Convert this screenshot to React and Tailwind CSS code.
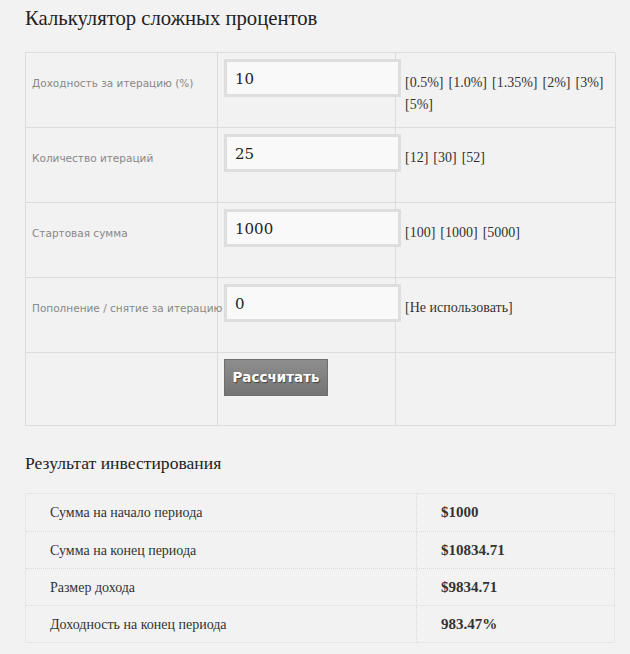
const serif = "font-['Liberation_Serif',_'DejaVu_Serif',_serif]";

const rows = [
  { label: 'Доходность за итерацию (%)', value: '10', links: ['[0.5%]', '[1.0%]', '[1.35%]', '[2%]', '[3%]', '[5%]'] },
  { label: 'Количество итераций', value: '25', links: ['[12]', '[30]', '[52]'] },
  { label: 'Стартовая сумма', value: '1000', links: ['[100]', '[1000]', '[5000]'] },
  { label: 'Пополнение / снятие за итерацию', value: '0', links: ['[Не использовать]'] },
];

const results = [
  ['Сумма на начало периода', '$1000'],
  ['Сумма на конец периода', '$10834.71'],
  ['Размер дохода', '$9834.71'],
  ['Доходность на конец периода', '983.47%'],
];

export default function App() {
  return (
    <div className="min-h-[654px] w-[630px] bg-[#f2f2f2] pl-[25px] pt-[5px] text-[#333]">
      <h1 className={`${serif} text-[20.7px] leading-[26px] text-[#222]`}>Калькулятор сложных процентов</h1>

      <div className="mt-[21px] grid w-[590px] grid-cols-[192px_178px_220px] border-l border-t border-[#dcdcdc]">
        {rows.map((r) => (
          <div key={r.label} className="contents">
            <div className="h-[75px] border-b border-r border-[#dcdcdc] pl-[6px] pt-[22px] font-['DejaVu_Sans',_sans-serif] text-[10.5px] leading-[16px] whitespace-nowrap text-[#888]">
              {r.label}
            </div>
            <div className="h-[75px] border-b border-r border-[#dcdcdc] pl-[6px] pt-[6px]">
              <input
                readOnly
                value={r.value}
                className="relative z-10 h-[38px] w-[177px] border-[3px] border-[#dedede] bg-[#f9f9f9] pl-[8px] pt-[2px] font-['DejaVu_Serif',_serif] text-[15px] text-[#222] outline-none"
              />
            </div>
            <div className={`${serif} h-[75px] border-b border-r border-[#dcdcdc] pl-[9px] pr-[4px] pt-[19px] text-[14px] leading-[22px] text-[#333]`}>
              <div className="flex flex-wrap gap-x-[5px]">
                {r.links.map((l) => (
                  <span key={l}>{l}</span>
                ))}
              </div>
            </div>
          </div>
        ))}
        <div className="h-[73px] border-b border-r border-[#dcdcdc]" />
        <div className="h-[73px] border-b border-r border-[#dcdcdc] pl-[6px] pt-[6px]">
          <button
            type="button"
            className="h-[37px] w-[104px] border border-[#6e6e6e] bg-gradient-to-b from-[#8e8e8e] to-[#747474] font-['DejaVu_Sans',_sans-serif] text-[13.5px] font-bold text-white [text-shadow:1px_1px_1px_#444]"
          >
            Рассчитать
          </button>
        </div>
        <div className="h-[73px] border-b border-r border-[#dcdcdc]" />
      </div>

      <h2 className={`${serif} mt-[26px] text-[17.6px] leading-[22px] text-[#222]`}>Результат инвестирования</h2>

      <div className={`${serif} mt-[19px] w-[590px] border border-[#e6e6e6] text-[14px]`}>
        {results.map(([k, v], i) => (
          <div
            key={k}
            className={`grid h-[37px] grid-cols-[391px_1fr] items-center ${i > 0 ? 'border-t border-dotted border-[#dadada]' : ''}`}
          >
            <div className="flex h-full items-center border-r border-dotted border-[#dadada] pl-[24px] text-[#333]">{k}</div>
            <div className="pl-[24px] text-[15px] font-bold text-[#333]">{v}</div>
          </div>
        ))}
      </div>
    </div>
  );
}
